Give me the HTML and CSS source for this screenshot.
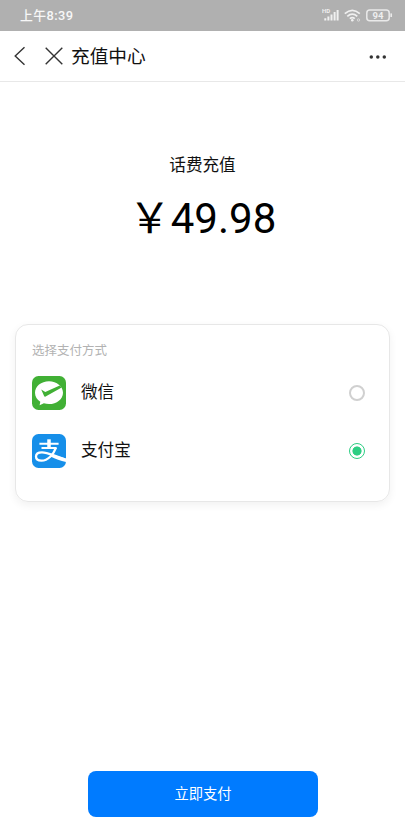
FILE: index.html
```html
<!DOCTYPE html>
<html lang="zh-CN">
<head>
<meta charset="utf-8">
<meta name="viewport" content="width=device-width, initial-scale=1">
<title>充值中心</title>
<link rel="stylesheet" href="styles.css">
</head>
<body>
<div class="screen">
  <div class="status">
    <span class="time">上午8:39</span>
    <svg class="status-icons" width="72" height="16" viewBox="0 0 72 16">
      <text class="hd" x="0" y="5">HD</text>
      <path d="M3.300 12.500V10.300M6.400 12.500V8.500M9.500 12.500V6.500M12.600 12.500V4M15.600 12.500V2" stroke="#f0f0f0" stroke-width="2"/>
      <g fill="none" stroke="#f0f0f0" stroke-width="1.7">
        <path d="M22.800 5.600Q30.300-1 37.800 5.600M25.300 8.300Q30.300 4 35.300 8.300M27.800 10.700Q30.300 8.700 32.800 10.700"/>
      </g>
      <circle cx="30.3" cy="12.3" r="1.3" fill="#f0f0f0"/>
      <circle cx="36.5" cy="12" r="1.2" fill="none" stroke="#dedede" stroke-width=".9"/>
      <rect x="44.8" y="1.9" width="22.4" height="10.8" rx="3" fill="none" stroke="#e9e9e9" stroke-width="1.5"/>
      <path d="M69.200 5.400V9" stroke="#e9e9e9" stroke-width="1.7"/>
      <text class="level" x="56" y="10.5" text-anchor="middle">94</text>
    </svg>
  </div>
  <header class="nav">
    <svg class="back" width="12" height="20" viewBox="0 0 12 20"><path d="M10.500 1.200L1.200 10l9.300 8.800"/></svg>
    <svg class="close" width="18" height="18" viewBox="0 0 18 18"><path d="M.7.8l16.600 16.400M17.300.8L.7 17.200"/></svg>
    <h1>充值中心</h1>
    <svg class="more" width="18" height="4" viewBox="0 0 18 4"><circle cx="2.3" cy="2" r="1.75"/><circle cx="8.8" cy="2" r="1.75"/><circle cx="15.3" cy="2" r="1.75"/></svg>
  </header>
  <main>
    <div class="product">话费充值</div>
    <div class="amount">￥49.98</div>
    <section class="card">
      <div class="card-title">选择支付方式</div>
      <div class="method">
        <svg width="34" height="34" viewBox="0 0 34 34">
          <rect width="34" height="34" rx="6.5" fill="#41b035"/>
          <path fill="#fff" d="M17 5.200C9.200 5.200 3 10.200 3 16.700c0 3.800 2.100 7 5.300 9.100L7.600 29.200l4.300-1.900c1.600.5 3.300.8 5.100.8 7.800 0 14-5.100 14-11.400S24.800 5.200 17 5.200z"/>
          <path fill="#41b035" d="M9.200 13.500l4.100 2.600L27.700 9.500l2 2L13.600 20.600c-.7.400-1.200.2-1.500-.5z"/>
        </svg>
        <span class="name">微信</span>
        <span class="radio"></span>
      </div>
      <div class="method">
        <svg width="34" height="34" viewBox="0 0 34 34">
          <rect width="34" height="34" rx="6.5" fill="#168fe9"/>
          <g fill="none" stroke="#fff">
            <path stroke-width="2" d="M7.400 9.800H26.600M9.500 14H24.500"/>
            <path stroke-width="3.500" d="M17 5.300v8.700"/>
            <path stroke-width="2.300" d="M24 13.600C21.500 20.500 16 26.700 9.500 26.700C5.600 26.700 4 24.800 4 22.500C4 19.700 6.500 18.300 10 18.300C15.500 18.300 19 20.700 33.500 25.500"/>
          </g>
          <path fill="#fff" d="M19.500 20.200L34 24.400v3.500c-5.500-1-10.500-3.300-15.500-5.500z"/>
        </svg>
        <span class="name">支付宝</span>
        <span class="radio checked"></span>
      </div>
    </section>
  </main>
  <button class="pay">立即支付</button>
</div>
</body>
</html>
```
FILE: styles.css
```css
* { box-sizing: border-box; }
body {
  margin: 0;
  background: #fff;
  color: #111;
  font-family: Roboto, "Noto Sans CJK SC", sans-serif;
}
.screen {
  display: flex;
  flex-direction: column;
  height: 824px;
  overflow: hidden;
}
.status {
  display: flex;
  align-items: center;
  justify-content: space-between;
  height: 31px;
  padding: 0 11px 0 20px;
  background: #b0b0b0;
  color: #f7f7f7;
}
.time {
  font-size: 12.8px;
  font-weight: 500;
  letter-spacing: .45px;
  line-height: 30px;
}
.hd { font-size: 6px; font-weight: 700; fill: #eee; }
.level { font-size: 9.5px; font-weight: 700; fill: #eee; }
.nav {
  display: flex;
  align-items: center;
  height: 51px;
  padding: 0 18px 0 14px;
  border-bottom: 1px solid #e8e8e8;
}
.nav path { fill: none; stroke: #333; stroke-width: 1.4; }
.nav circle { fill: #333; }
.nav .more { margin: 1px 0 0 auto; }
.close { margin-left: 19px; }
.nav h1 {
  margin: 0 0 0 8px;
  padding-top: 2px;
  font-size: 18.7px;
  font-weight: 400;
  line-height: 28px;
}
main {
  flex: 1;
  padding: 72px 15px 0;
}
.product {
  font-size: 16.6px;
  line-height: 24px;
  text-align: center;
}
.amount {
  height: 60px;
  margin-top: 11px;
  color: #000;
  font-size: 42px;
  line-height: 60px;
  text-align: center;
}
.card {
  height: 178px;
  margin-top: 75px;
  padding: 17px 24px 0 16px;
  border: 1px solid #e7e7e7;
  border-radius: 13px;
  box-shadow: 0 3px 8px rgba(0, 0, 0, .06);
}
.card-title {
  color: #b2b2b2;
  font-size: 12.5px;
  line-height: 18px;
}
.method {
  display: flex;
  align-items: center;
  height: 34px;
  margin-top: 16px;
}
.method + .method { margin-top: 24px; }
.name {
  margin-left: 15px;
  font-size: 16.6px;
  line-height: 24px;
}
.radio {
  width: 16px;
  height: 16px;
  margin-left: auto;
  border: 2px solid #d0d0d0;
  border-radius: 50%;
}
.radio.checked {
  border: 1.5px solid #2dce83;
  background: radial-gradient(circle, #2dce83 4.2px, #fff 4.9px);
}
.pay {
  width: 230px;
  height: 46px;
  margin: 0 0 7px 88px;
  padding: 0 0 4px;
  border: 0;
  border-radius: 8px;
  background: #007bff;
  color: #fff;
  font: 14.3px Roboto, "Noto Sans CJK SC", sans-serif;
}
```
